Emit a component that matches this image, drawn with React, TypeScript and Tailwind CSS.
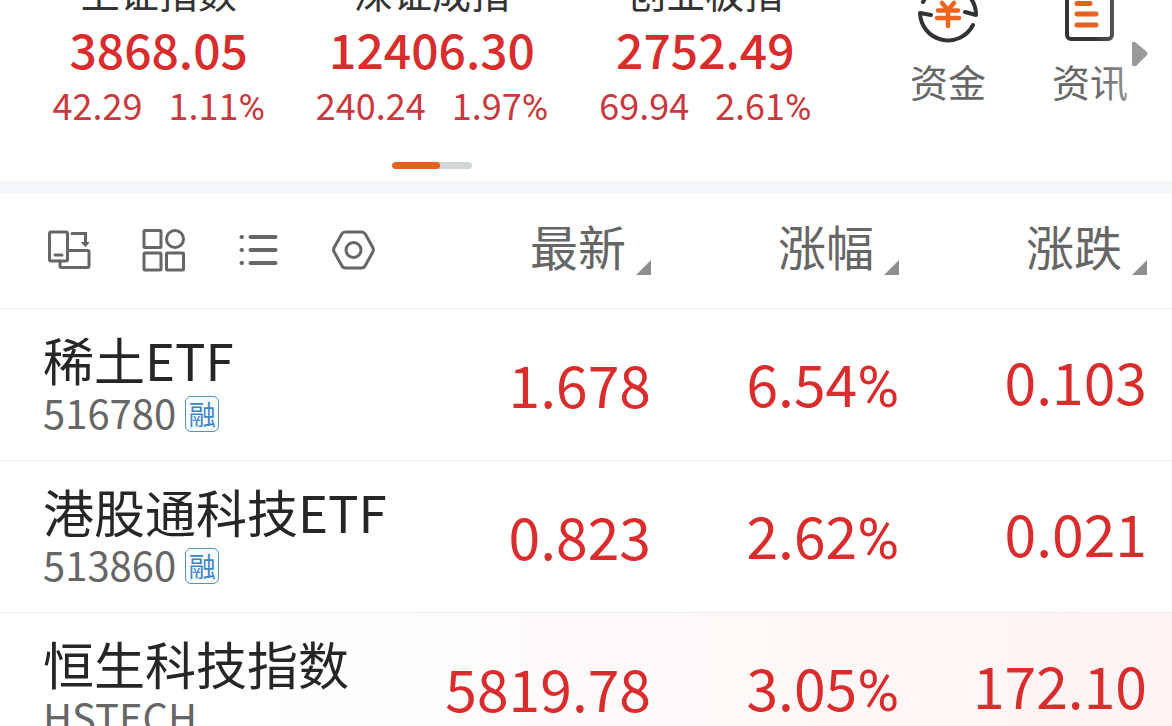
import React from 'react'

type Index = { name: string; value: string; change: string; percent: string }
type Stock = {
  name: string
  code: string
  margin?: boolean
  latest: string
  percent: string
  change: string
  highlight?: boolean
}

const indexes: Index[] = [
  { name: '上证指数', value: '3868.05', change: '42.29', percent: '1.11' },
  { name: '深证成指', value: '12406.30', change: '240.24', percent: '1.97' },
  { name: '创业板指', value: '2752.49', change: '69.94', percent: '2.61' },
]

const stocks: Stock[] = [
  { name: '稀土ETF', code: '516780', margin: true, latest: '1.678', percent: '6.54', change: '0.103' },
  { name: '港股通科技ETF', code: '513860', margin: true, latest: '0.823', percent: '2.62', change: '0.021' },
  { name: '恒生科技指数', code: 'HSTECH', latest: '5819.78', percent: '3.05', change: '172.10', highlight: true },
]

const Percent = ({ value }: { value: string }) => (
  <>
    {value}
    <span className="font-[Roboto,sans-serif] leading-none">%</span>
  </>
)

const FundsIcon = () => (
  <svg className="mt-4 h-16 w-16" viewBox="0 0 64 64" fill="none" strokeLinecap="round" strokeLinejoin="round">
    <path d="M15 33 4 31A28 28 0 0 0 57 43M7 20A28 28 0 0 1 60 33L49 30" stroke="#333" strokeWidth="4" />
    <path d="M26 21 32 28 38 21M22 28.5H42M21 36H43M32 28V44" stroke="#f1641e" strokeWidth="4.5" />
  </svg>
)

const NewsIcon = () => (
  <svg className="mt-4 h-16 w-16" viewBox="0 0 64 64" fill="none" strokeLinecap="round">
    <rect x="9" y="4" width="45" height="53" rx="4" stroke="#333" strokeWidth="4" />
    <path d="M19 21.5H32M19 32H38M19 43H38" stroke="#e8611c" strokeWidth="5" />
  </svg>
)

const RotateIcon = () => (
  <svg className="h-12 w-12" viewBox="0 0 48 48" fill="none" stroke="#666" strokeWidth="3" strokeLinecap="round">
    <rect x="3.5" y="6" width="18" height="29" rx="1.5" />
    <path d="M22 24.5H41.5Q43 24.5 43 26V40Q43 41.5 41.5 41.5H15.5Q14 41.5 14 40V35" />
    <path d="M9 29H16M26 7.5H39.5V17" />
    <path d="M36 16.5H43L39.5 20.5Z" fill="#666" strokeWidth="1" />
  </svg>
)

const GridIcon = () => (
  <svg className="h-12 w-12" viewBox="0 0 48 48" fill="none" stroke="#666" strokeWidth="3">
    <rect x="3" y="4.5" width="17" height="17" rx="1" />
    <circle cx="34" cy="13" r="8.5" />
    <rect x="3" y="27" width="17" height="17" rx="1" />
    <rect x="25.5" y="27" width="17" height="17" rx="1" />
  </svg>
)

const ListIcon = () => (
  <svg className="h-12 w-12" viewBox="0 0 48 48" stroke="#666" strokeWidth="4" strokeLinecap="round">
    <path d="M5.5 11H6M5.5 24H6M5.5 37H6M14.5 11H39.5M14.5 24H39.5M14.5 37H39.5" />
  </svg>
)

const NutIcon = () => (
  <svg className="h-12 w-12" viewBox="0 0 48 48" fill="none" stroke="#666" strokeWidth="3">
    <path d="M14.5 6H30.5Q33 6 34.3 8L41.8 21.5Q43 24 41.8 26L34.3 39.5Q33 42 30.5 42H14.5Q12 42 10.7 39.5L3.2 26Q2 24 3.2 21.5L10.7 8Q12 6 14.5 6Z" />
    <circle cx="22.5" cy="24" r="7.5" />
  </svg>
)

const tools = [
  { label: '横屏', icon: <RotateIcon /> },
  { label: '宫格', icon: <GridIcon /> },
  { label: '列表', icon: <ListIcon /> },
  { label: '设置', icon: <NutIcon /> },
]

const shortcuts = [
  { label: '资金', icon: <FundsIcon /> },
  { label: '资讯', icon: <NewsIcon /> },
]

const SortHeader = ({ label }: { label: string }) => (
  <button className="inline-flex items-end gap-[10px] pb-[10px] align-middle text-[48px] leading-[60px] text-[#666]">
    {label}
    <svg className="h-[15px] w-[15px]" viewBox="0 0 15 15">
      <path d="M15 0V15H0Z" fill="#8e8e8e" />
    </svg>
  </button>
)

const Header = () => (
  <header className="-mt-[34px] flex border-b-[12px] border-[#f5f8fa] pb-3 pl-[22px]">
    <div className="flex-1">
      <div className="grid grid-cols-3">
        {indexes.map((item) => (
          <div key={item.name} className="text-center whitespace-nowrap">
            <div className="text-[39px] leading-[50px] text-[#333]">{item.name}</div>
            <div className="text-[48px] leading-[64px] font-medium text-[#d92d2d]">{item.value}</div>
            <div className="flex justify-center gap-[26px] text-[36px] leading-[48px] text-[#c9383c]">
              <span>{item.change}</span>
              <span>
                <Percent value={item.percent} />
              </span>
            </div>
          </div>
        ))}
      </div>
      <div className="mx-auto mt-[34px] h-[7px] w-20 overflow-hidden rounded-full bg-[#d3d6d6]">
        <div className="h-full w-12 rounded-full bg-[#e8611c]" />
      </div>
    </div>
    <nav className="relative flex w-[330px] pr-[11px] pl-[35px]">
      {shortcuts.map((item) => (
        <a key={item.label} href="#" className="flex flex-1 flex-col items-center gap-[11px] text-[38px] leading-[48px] text-[#666]">
          {item.icon}
          {item.label}
        </a>
      ))}
      <div className="pointer-events-none absolute inset-y-0 right-0 w-20 bg-linear-to-r from-white/0 to-white/60" />
      <svg className="absolute top-[75px] right-6 h-[26px] w-4" viewBox="0 0 16 26">
        <path d="M0 2Q0 0 3 1L15 11Q16 13 15 14L4 25Q0 26 0 23Z" fill="#999" />
      </svg>
    </nav>
  </header>
)

const StockTable = () => (
  <table className="w-full table-fixed text-right whitespace-nowrap">
    <colgroup>
      <col />
      <col className="w-[248px]" />
      <col className="w-[248px]" />
      <col className="w-[273px]" />
    </colgroup>
    <thead>
      <tr className="h-[115px] border-b border-[#eee]">
        <th className="pl-[46px] font-normal">
          <div className="flex gap-[47px]">
            {tools.map((tool) => (
              <button key={tool.label} aria-label={tool.label}>
                {tool.icon}
              </button>
            ))}
          </div>
        </th>
        <th className="font-normal">
          <SortHeader label="最新" />
        </th>
        <th className="font-normal">
          <SortHeader label="涨幅" />
        </th>
        <th className="pr-[25px] font-normal">
          <SortHeader label="涨跌" />
        </th>
      </tr>
    </thead>
    <tbody className="text-[57px] leading-[64px] text-[#d92d2d]">
      {stocks.map((stock) => (
        <tr
          key={stock.code}
          className={
            stock.highlight
              ? 'h-[152px] border-b border-[#eee] bg-linear-to-r from-white from-20% to-[#fef3f2]'
              : 'h-[152px] border-b border-[#eee]'
          }
        >
          <td className="pt-[21px] pl-[43px] text-left align-top">
            <div className="text-[51px] leading-[58px] text-[#262626]">{stock.name}</div>
            <div className="flex items-end gap-[9px] text-[40px] leading-[48px] text-[#666]">
              {stock.code}
              {stock.margin && (
                <span className="mb-1 flex h-9 w-[34px] items-center justify-center rounded-md border border-[#5a94b8] bg-[#f7fcff] text-[27px] leading-8 text-[#4083c4]">
                  融
                </span>
              )}
            </div>
          </td>
          <td className="pb-[3px]">{stock.latest}</td>
          <td className="pb-[3px]">
            <Percent value={stock.percent} />
          </td>
          <td className="pr-[25px] pb-2">{stock.change}</td>
        </tr>
      ))}
    </tbody>
  </table>
)

export default function App() {
  return (
    <main className="h-screen overflow-hidden bg-white font-['Noto_Sans_CJK_SC',sans-serif]">
      <Header />
      <StockTable />
    </main>
  )
}
